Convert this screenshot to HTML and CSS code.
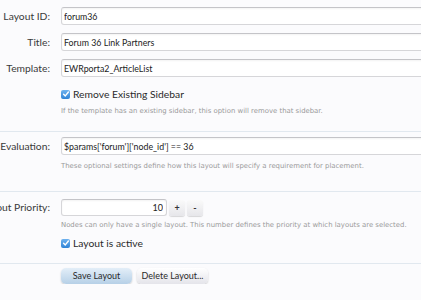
FILE: index.html
```html
<!DOCTYPE html>
<html>
<head>
    <title>Edit Layout</title>
    <link rel="stylesheet" href="styles.css">
</head>
<body>
    <form class="layout-form">
        <fieldset class="group first">
            <div class="ctrl-unit">
                <label class="ctrl-label">Layout ID:</label>
                <div class="ctrl-field"><input class="text-box" type="text" value="forum36"></div>
            </div>
            <div class="ctrl-unit">
                <label class="ctrl-label">Title:</label>
                <div class="ctrl-field"><input class="text-box" type="text" value="Forum 36 Link Partners"></div>
            </div>
            <div class="ctrl-unit">
                <label class="ctrl-label">Template:</label>
                <div class="ctrl-field"><input class="text-box" type="text" value="EWRporta2_ArticleList"></div>
            </div>
            <div class="ctrl-unit">
                <span class="ctrl-label"></span>
                <div class="ctrl-field">
                    <div class="check-line">
                        <span class="check"><svg width="8" height="8" viewBox="0 0 8 8"><path d="M1.6 4.2 L3.3 5.9 L6.4 2" fill="none" stroke="#fff" stroke-width="1.4" stroke-linecap="round" stroke-linejoin="round"/></svg></span>
                        Remove Existing Sidebar
                    </div>
                    <p class="explain">If the template has an existing sidebar, this option will remove that sidebar.</p>
                </div>
            </div>
        </fieldset>

        <fieldset class="group second">
            <div class="ctrl-unit">
                <label class="ctrl-label">Evaluation:</label>
                <div class="ctrl-field">
                    <input class="text-box" type="text" value="$params['forum']['node_id'] == 36">
                    <p class="explain">These optional settings define how this layout will specify a requirement for placement.</p>
                </div>
            </div>
        </fieldset>

        <fieldset class="group third">
            <div class="ctrl-unit">
                <label class="ctrl-label priority">Layout Priority:</label>
                <div class="ctrl-field">
                    <div class="spin">
                        <input class="text-box number" type="text" value="10">
                        <span class="spin-btn">+</span>
                        <span class="spin-btn">-</span>
                    </div>
                    <p class="explain tight">Nodes can only have a single layout. This number defines the priority at which layouts are selected.</p>
                    <div class="check-line active">
                        <span class="check"><svg width="8" height="8" viewBox="0 0 8 8"><path d="M1.6 4.2 L3.3 5.9 L6.4 2" fill="none" stroke="#fff" stroke-width="1.4" stroke-linecap="round" stroke-linejoin="round"/></svg></span>
                        Layout is active
                    </div>
                </div>
            </div>
        </fieldset>

        <div class="submit-unit">
            <span class="button primary">Save Layout</span>
            <span class="button">Delete Layout...</span>
        </div>
    </form>
</body>
</html>
```

FILE: styles.css
```css
body {
    margin: 0;
    background: #fbfbfd;
    font-family: "Lato", "Liberation Sans", sans-serif;
    font-size: 10px;
    color: #333;
    overflow: hidden;
}
.layout-form {
    margin-left: -40px;
    width: 520px;
    padding-top: 7px;
}
.group {
    border: 0;
    margin: 0;
    padding: 0 0 6px;
    border-bottom: 1px solid #e1e8ef;
}
.group.second {
    padding: 5px 0 11px;
}
.group.third {
    padding: 7px 0 6px;
}
.ctrl-unit {
    display: flex;
    gap: 11px;
    margin-bottom: 8px;
}
.ctrl-label {
    width: 90px;
    flex: none;
    text-align: right;
    white-space: nowrap;
    line-height: 18px;
    font-size: 10.3px;
    color: #3a3a3a;
}
.ctrl-label.priority {
    line-height: 17px;
}
.ctrl-field {
    flex: 1;
}
.text-box {
    display: block;
    box-sizing: border-box;
    width: 420px;
    height: 18px;
    margin: 0;
    padding: 0 2px;
    border: 1px solid #d6d6d9;
    border-top-color: #c4c4c8;
    border-radius: 3px;
    background: #fff;
    box-shadow: inset 0 1px 2px rgba(0,0,0,0.05);
    font-family: "Lato", "Liberation Sans", sans-serif;
    font-size: 8.8px;
    color: #222;
}
.check-line {
    display: flex;
    align-items: center;
    gap: 3px;
    margin-top: 3px;
    font-size: 10.3px;
    line-height: 12px;
    color: #2a2a2a;
}
.check {
    width: 9px;
    height: 9px;
    border-radius: 2px;
    background: linear-gradient(#6fb2ee, #2f83d6);
    display: flex;
    align-items: center;
    justify-content: center;
}
.explain {
    margin: 5px 0 0;
    font-family: "DejaVu Sans", sans-serif;
    font-size: 6.9px;
    line-height: 12px;
    color: #9a9a9a;
}
.explain.tight {
    margin-top: 3px;
}
.spin {
    display: flex;
    align-items: center;
    gap: 2px;
}
.number {
    width: 106px;
    height: 17px;
    text-align: right;
    font-size: 9px;
    padding-right: 3px;
}
.spin-btn {
    width: 16px;
    height: 16px;
    border-radius: 3px;
    background: linear-gradient(#fafafa, #e6e6ea);
    box-shadow: 0 1px 1px rgba(0,0,0,0.15);
    text-align: center;
    line-height: 15px;
    font-size: 9px;
    font-weight: bold;
    color: #333;
}
.check-line.active {
    margin-top: 6px;
}
.submit-unit {
    display: flex;
    gap: 5px;
    padding: 4px 0 0 101px;
}
.button {
    width: 71px;
    height: 16px;
    border-radius: 5px;
    background: linear-gradient(#ffffff, #e4e4ea);
    box-shadow: 0 1px 2px rgba(0,0,0,0.2);
    text-align: center;
    line-height: 16px;
    font-size: 9px;
    color: #2a2a2a;
}
.button.primary {
    background: linear-gradient(#e3eef8, #b6d0e7);
}
```
